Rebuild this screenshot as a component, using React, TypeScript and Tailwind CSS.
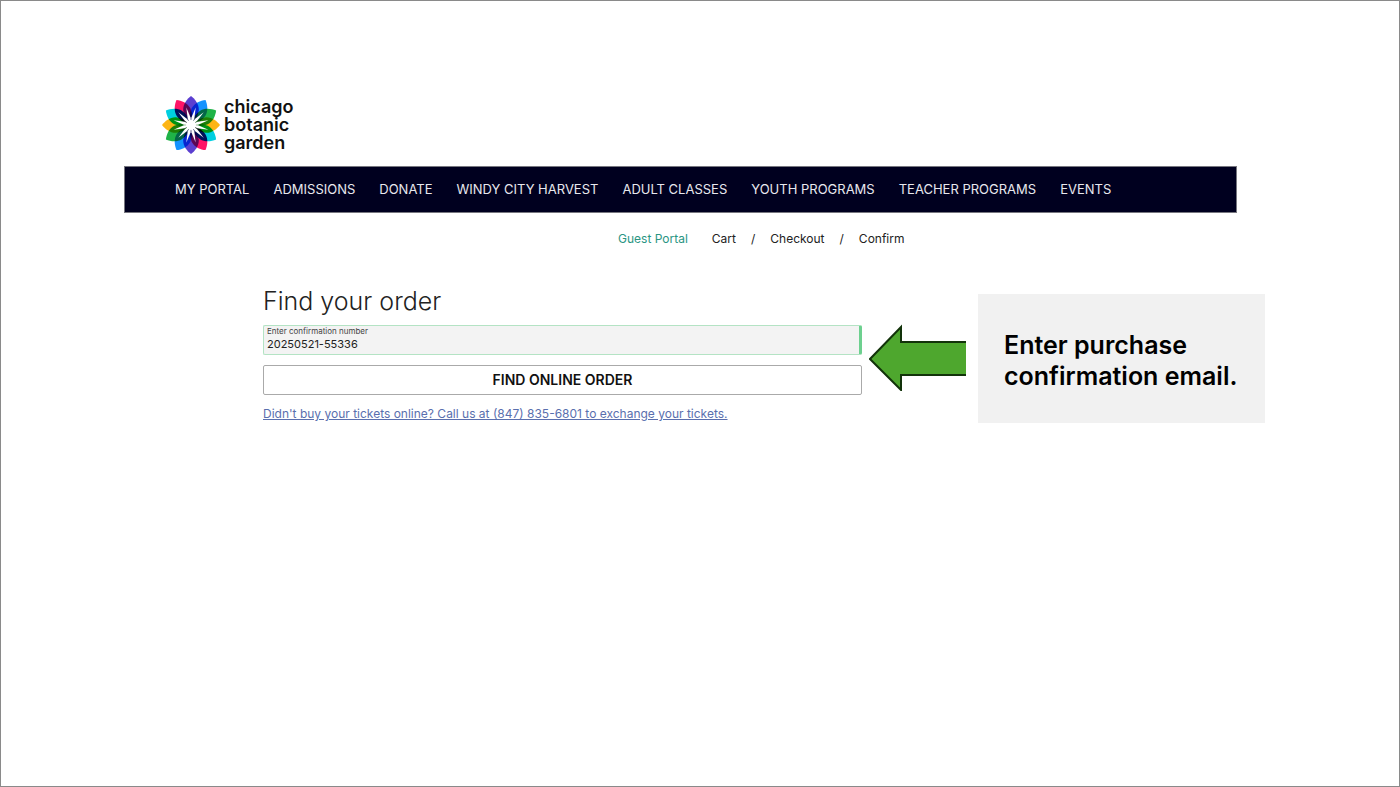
import { useState } from 'react';

const navItems = [
  'My Portal',
  'Admissions',
  'Donate',
  'Windy City Harvest',
  'Adult Classes',
  'Youth Programs',
  'Teacher Programs',
  'Events',
];

// Clockwise from the top, repeated twice round the flower
const petalColors = ['#5b3fd0', '#1593ff', '#1fb348', '#fdb515', '#00cfe0', '#ff1467'];

function FlowerLogo() {
  const petals = Array.from({ length: 12 }, (_, i) => i);

  return (
    <svg className="h-[58px] w-[58px] isolate" viewBox="-29 -29 58 58" aria-hidden="true">
      {petals.map((i) => (
        <path
          key={i}
          d="M0 -29 C4 -26 8 -21 7.8 -15 C7 -9 4 -3 0 0 C-4 -3 -7 -9 -7.8 -15 C-8 -21 -4 -26 0 -29Z"
          fill={petalColors[i % 6]}
          transform={`rotate(${i * 30})`}
          className="mix-blend-multiply"
        />
      ))}
      {petals.map((i) => (
        <path
          key={i}
          d="M0 -18 L1.5 -7 L0 0 L-1.5 -7Z"
          fill="#fff"
          transform={`rotate(${i * 30 + 15})`}
        />
      ))}
      <circle r="5" fill="#fff" />
    </svg>
  );
}

export default function App() {
  const [confirmation, setConfirmation] = useState('20250521-55336');

  return (
    <div className="min-h-screen border border-[#8a8a8a] bg-white pt-[95px] pl-[123px] font-['Inter',sans-serif] text-[#222]">
      {/* HEADER */}
      <header className="mr-[162px]">
        <a href="#" className="ml-[38px] flex w-fit items-center gap-1 pb-3">
          <FlowerLogo />
          <span className="text-lg leading-[18px] font-semibold text-[#111]">
            chicago
            <br />
            botanic
            <br />
            garden
          </span>
        </a>
        <nav className="flex h-[47px] items-center gap-6 border border-[#77777f] bg-[#00001f] pl-[50px] text-[13px] whitespace-nowrap text-[#e8e8ee] uppercase">
          {navItems.map((item) => (
            <a key={item} href="#">
              {item}
            </a>
          ))}
        </nav>
      </header>

      {/* CHECKOUT STEPS */}
      <nav className="mt-4 ml-[494px] flex items-center text-xs leading-5">
        <a href="#" className="mr-6 text-[#2a9583]">Guest Portal</a>
        <a href="#">Cart</a>
        <span className="mx-[15px]">/</span>
        <a href="#">Checkout</a>
        <span className="mx-[15px]">/</span>
        <a href="#">Confirm</a>
      </nav>

      <main className="mt-9 mr-[134px] ml-[139px] flex items-start">
        {/* ORDER LOOKUP */}
        <form className="flex-1" onSubmit={(e) => e.preventDefault()}>
          <h1 className="pb-2 text-[25px] leading-8 font-light text-[#222]">Find your order</h1>
          <div className="relative">
            <label htmlFor="confirmation" className="absolute top-0 left-1 text-[8px] leading-3 text-[#444]">
              Enter confirmation number
            </label>
            <input
              id="confirmation"
              value={confirmation}
              onChange={(e) => setConfirmation(e.target.value)}
              className="block h-[30px] w-full rounded-xs border border-r-3 border-[#b4e3c4] border-r-[#6dd08f] bg-[#f3f3f3] pt-2 pl-[3px] text-[11px]"
            />
          </div>
          <button
            type="submit"
            className="mt-[10px] block h-[30px] w-full rounded-xs border border-[#aaa] text-sm font-semibold text-[#111] uppercase"
          >
            Find online order
          </button>
          <a href="#" className="mt-[9px] block text-xs leading-5 text-[#5a6fae] underline">
            Didn't buy your tickets online? Call us at (847) 835-6801 to exchange your tickets.
          </a>
        </form>

        {/* CALLOUT */}
        <svg className="mt-[38px] mr-3 ml-[7px] h-[68px] w-[97px]" viewBox="0 0 97 68" aria-hidden="true">
          <path d="M98 19 H32 V4 L1 36 L32 67 V52 H98" fill="#4ea72e" stroke="#12330a" strokeWidth="2" />
        </svg>
        <aside className="mt-[9px] flex h-[129px] w-[287px] items-center bg-[#f1f1f1] pt-1 pl-[26px]">
          <p className="text-[25px] leading-[31px] font-semibold text-black">
            Enter purchase
            <br />
            confirmation email.
          </p>
        </aside>
      </main>
    </div>
  );
}
